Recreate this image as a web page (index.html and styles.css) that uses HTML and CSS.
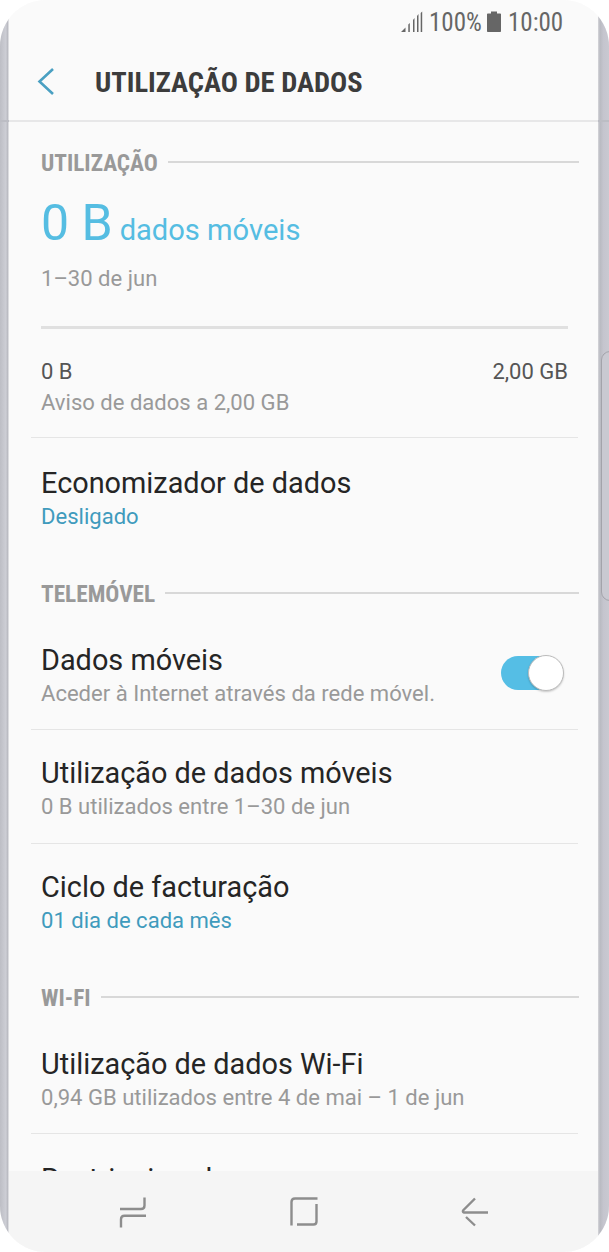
FILE: index.html
```html
<!DOCTYPE html>
<html lang="pt">
<head>
<meta charset="utf-8">
<title>Utilização de dados</title>
<link rel="stylesheet" href="styles.css">
</head>
<body>
<div class="phone">
  <div class="edge edge-left"></div>
  <main class="screen">
    <div class="status">
      <svg class="signal" width="22" height="22" viewBox="0 0 22 22"><path d="M0 21l4.500-4.500V21zM7.300 13.500l1.500-1.500v9H7.300zM12 9l1.500-2v14H12zM16 5l1.500-2v18H16zM19.700 2L21.200 .5V21h-1.500z"/></svg>
      <span class="percent">100%</span>
      <svg class="battery" width="14" height="22" viewBox="0 0 14 22"><path d="M4 0.500h6v2h3.200q.8 0 .8.800V20.200q0 .8-.8.800H.8q-.8 0-.8-.8V3.300q0-.8.8-.8H4z"/></svg>
      <span class="time">10:00</span>
    </div>
    <header class="header">
      <svg class="back" width="18" height="30" viewBox="0 0 18 30"><path d="M16 2L2.500 14.500 16 27"/></svg>
      <h1>UTILIZAÇÃO DE DADOS</h1>
    </header>
    <div class="content">
      <h2 class="section first"><span>UTILIZAÇÃO</span></h2>
      <div class="usage">
        <p class="amount"><span class="big">0 B</span> <span class="unit">dados móveis</span></p>
        <p class="sub period">1–30 de jun</p>
        <div class="track"></div>
        <div class="range"><span>0 B</span><span>2,00 GB</span></div>
        <p class="sub warning">Aviso de dados a 2,00 GB</p>
      </div>
      <div class="row ruled saver">
        <div><p class="title">Economizador de dados</p><p class="sub link">Desligado</p></div>
      </div>
      <h2 class="section"><span>TELEMÓVEL</span></h2>
      <div class="row after-section">
        <div><p class="title">Dados móveis</p><p class="sub">Aceder à Internet através da rede móvel.</p></div>
        <div class="switch"><div class="knob"></div></div>
      </div>
      <div class="row ruled">
        <div><p class="title">Utilização de dados móveis</p><p class="sub">0 B utilizados entre 1–30 de jun</p></div>
      </div>
      <div class="row ruled cycle">
        <div><p class="title">Ciclo de facturação</p><p class="sub link">01 dia de cada mês</p></div>
      </div>
      <h2 class="section"><span>WI-FI</span></h2>
      <div class="row after-section">
        <div><p class="title">Utilização de dados Wi-Fi</p><p class="sub">0,94 GB utilizados entre 4 de mai – 1 de jun</p></div>
      </div>
      <div class="row ruled last">
        <div><p class="title">Restringir redes</p></div>
      </div>
    </div>
    <nav class="nav">
      <svg width="28" height="32" viewBox="0 0 28 32"><path d="M1 13h21q3.500 0 3.500-3.500V1.500M27 19.800H5.500Q2 19.800 2 23.300V31.500"/></svg>
      <svg width="28" height="30" viewBox="0 0 28 30"><path d="M1.500 28.500V5q0-3.500 3.500-3.500h22.500M26.500 7v17.500q0 3-3 3H7"/></svg>
      <svg width="28" height="30" viewBox="0 0 28 30"><path d="M14 1.500L2.500 13q-1.500 2 .5 2.500h24M5 20l9 8.500"/></svg>
    </nav>
  </main>
  <div class="edge edge-right"><div class="handle"></div></div>
</div>
</body>
</html>
```
FILE: styles.css
```css
* { box-sizing: border-box; }
body { margin: 0; background: #fff; font-family: Roboto, sans-serif; }
p, h1, h2 { margin: 0; }
.phone {
  display: grid;
  grid-template-columns: 9px 589px 11px;
  width: 609px;
  height: 1252px;
  border-radius: 46px;
  overflow: hidden;
  background: #fafafa;
}
.edge { overflow: hidden; }
.edge-left {
  background:
    linear-gradient(#bcbdc4, #bcbdc4) 0 120px / 100% 2px no-repeat,
    linear-gradient(90deg, #bdbec5, #cdced5 65%, #b9bac1 85%, #f0f0f2);
}
.edge-right {
  padding: 351px 0 0 3px;
  background:
    linear-gradient(#bcbdc4, #bcbdc4) 0 120px / 100% 2px no-repeat,
    linear-gradient(90deg, #d6d6da, #b9bac1 18%, #c5c5ce 50%, #c9c9d1);
}
.handle { width: 18px; height: 250px; border: 1px solid #a3a3aa; border-radius: 10px; background: #c9c9d1; }
.screen { display: flex; flex-direction: column; height: 1252px; overflow: hidden; background: #fafafa; }
.status { display: flex; align-items: center; flex: none; height: 44px; padding-left: 392px; color: #666; font-size: 25px; white-space: nowrap; }
.status svg { fill: #666; flex: none; }
.signal, .battery { margin-top: -1px; }
.percent { width: 53px; margin-left: 6px; }
.battery { margin-left: 5px; }
.time { margin-left: 7px; }
.percent, .time, h1, .section span { font-family: "Roboto Condensed", Roboto, sans-serif; font-stretch: 75%; }
.header { display: flex; align-items: center; flex: none; height: 78px; padding-left: 28px; border-bottom: 2px solid #e7e7e8; }
.back { fill: none; stroke: #4aa0c2; stroke-width: 2.600; }
h1 { margin: 1px 0 0 40px; font-size: 28.500px; font-weight: 700; line-height: 34px; color: #3c3c3c; white-space: nowrap; }
.content { flex: 1; min-height: 0; overflow: hidden; }
.section { display: flex; align-items: center; height: 26px; margin: 31px 19px 0 32px; font-size: 23.300px; line-height: 26px; font-weight: 700; color: #999; }
.section.first { margin-top: 28px; }
.section::after { content: ""; flex: 1; height: 2px; margin: 0 0 2px 10px; background: #d8d8d8; }
.usage { height: 261px; padding: 0 30px 0 32px; color: #55bde2; }
.amount { height: 79px; line-height: 94px; white-space: nowrap; }
.big { font-size: 50px; }
.unit { margin-left: 3px; font-size: 29.100px; }
.sub { font-size: 22.060px; line-height: 34px; color: #999; white-space: nowrap; }
.period { margin-top: 7px; }
.track { height: 3px; margin-top: 30px; background: #e0e0e0; }
.range { display: flex; justify-content: space-between; margin-top: 26px; font-size: 22px; line-height: 34px; color: #555; }
.warning { margin-top: -3px; }
.row { display: flex; height: 114px; margin: 0 20px 0 22px; padding: 27px 0 0 10px; }
.ruled { border-top: 1px solid #e5e5e5; padding-top: 26px; }
.saver { height: 113px; padding-top: 28px; }
.cycle { height: 111px; }
.last { padding-top: 28px; }
.row.after-section { height: 122px; padding-top: 36px; }
.title { font-size: 28.850px; line-height: 34px; color: #252525; white-space: nowrap; }
.link { color: #3f9bbd; }
.switch { width: 63px; height: 34px; margin: 13px 14px 0 auto; border-radius: 17px; background: linear-gradient(90deg, #55bee5 46px, transparent 46px); }
.knob { width: 36px; height: 36px; margin: -1px 0 0 27px; border: 1px solid #bcbcbc; border-radius: 50%; background: #fff; box-shadow: 0 1px 2px #0003; }
.nav { display: flex; align-items: center; flex: none; gap: 143px; height: 81px; padding-left: 110px; background: #f5f5f5; }
.nav svg { fill: none; stroke: #8d8d8d; stroke-width: 2.400; }
```
